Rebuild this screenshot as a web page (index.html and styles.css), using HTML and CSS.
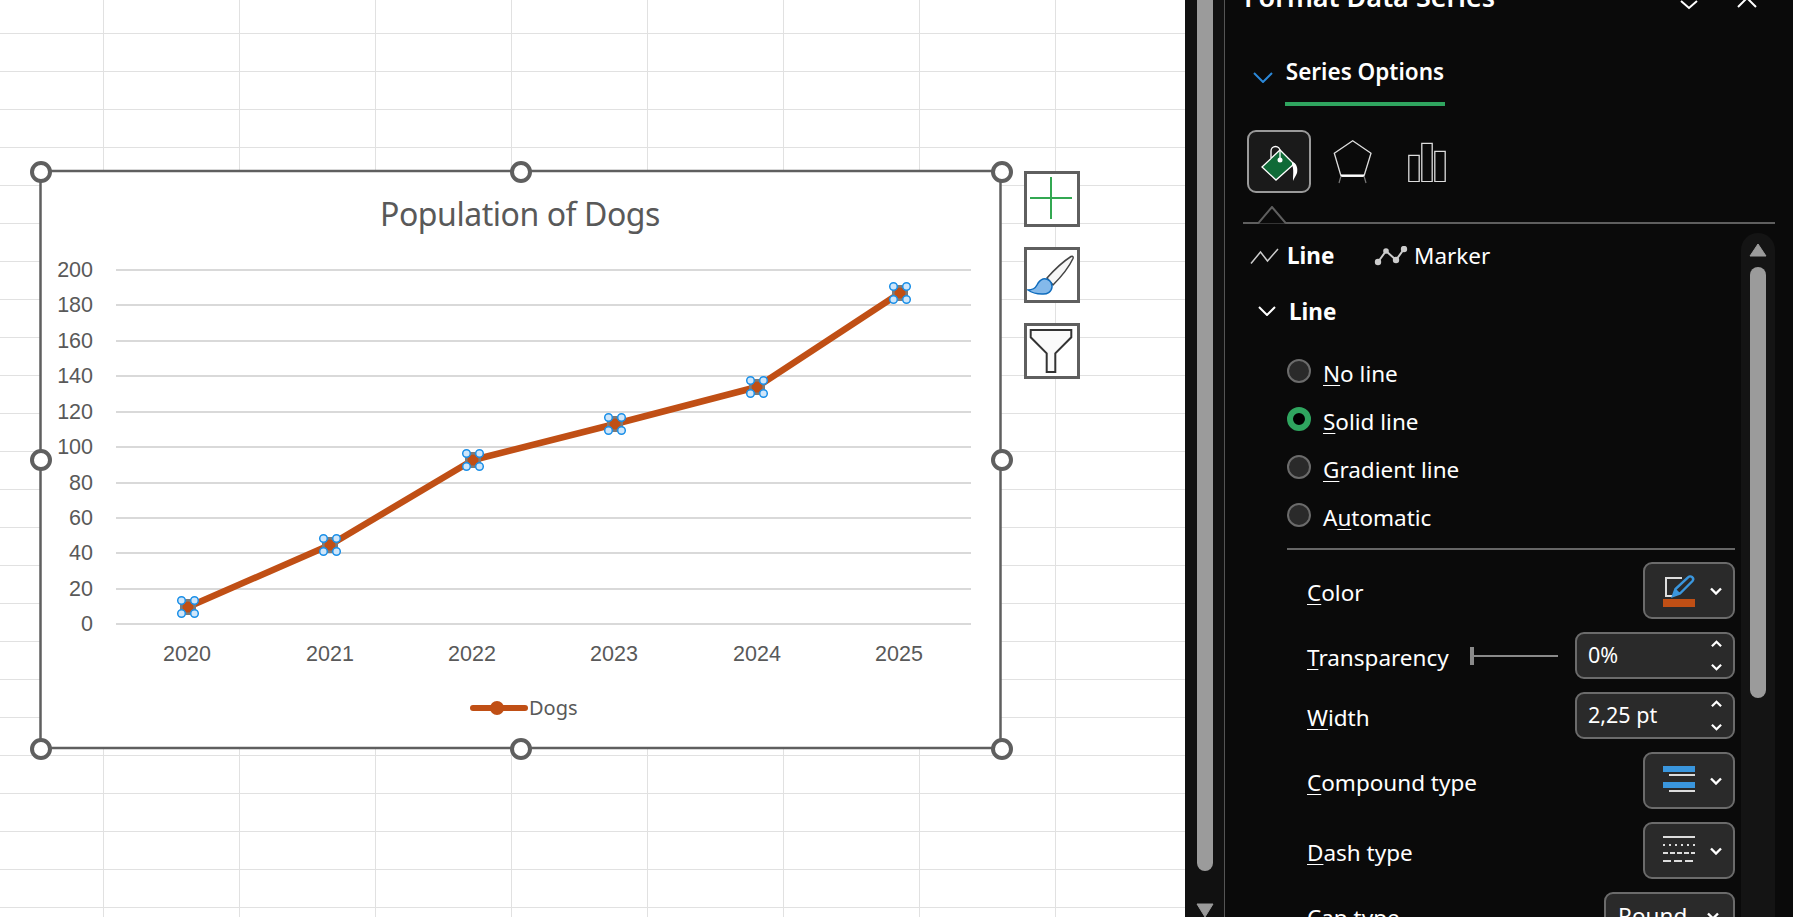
FILE: index.html
```html
<!DOCTYPE html>
<html lang="en">
  <head>
    <meta charset="utf-8" />
    <meta name="viewport" content="width=device-width, initial-scale=1" />
    <title>Format Data Series</title>
    <link rel="stylesheet" href="styles.css">
  </head>
  <body>
    <svg class="defs" width="0" height="0">
      <symbol id="chev" viewBox="0 0 12 8"><path d="M1 1.500l5 5 5-5" fill="none" stroke="#fff" stroke-width="2.400"/></symbol>
      <symbol id="chevup" viewBox="0 0 12 8"><path d="M1 6.500l5-5 5 5" fill="none" stroke="#fff" stroke-width="2.400"/></symbol>
    </svg>

    <!--worksheet with the chart sitting on it-->
    <div class="sheet">
      <svg class="chart" width="1185" height="917" viewBox="0 0 1185 917">
        <rect class="frame" x="40.5" y="171" width="960" height="577"/>
        <text class="title" x="520" y="226" text-anchor="middle">Population of Dogs</text>

        <g class="grid">
          <line x1="116" x2="971" y1="270" y2="270"/>
          <line x1="116" x2="971" y1="305" y2="305"/>
          <line x1="116" x2="971" y1="341" y2="341"/>
          <line x1="116" x2="971" y1="376" y2="376"/>
          <line x1="116" x2="971" y1="412" y2="412"/>
          <line x1="116" x2="971" y1="447" y2="447"/>
          <line x1="116" x2="971" y1="483" y2="483"/>
          <line x1="116" x2="971" y1="518" y2="518"/>
          <line x1="116" x2="971" y1="553" y2="553"/>
          <line x1="116" x2="971" y1="589" y2="589"/>
          <line x1="116" x2="971" y1="624" y2="624"/>
        </g>

        <g class="axis" text-anchor="end">
          <text x="93" y="277">200</text>
          <text x="93" y="312">180</text>
          <text x="93" y="348">160</text>
          <text x="93" y="383">140</text>
          <text x="93" y="419">120</text>
          <text x="93" y="454">100</text>
          <text x="93" y="490">80</text>
          <text x="93" y="525">60</text>
          <text x="93" y="560">40</text>
          <text x="93" y="596">20</text>
          <text x="93" y="631">0</text>
        </g>
        <g class="axis" text-anchor="middle">
          <text x="187" y="661">2020</text>
          <text x="330" y="661">2021</text>
          <text x="472" y="661">2022</text>
          <text x="614" y="661">2023</text>
          <text x="757" y="661">2024</text>
          <text x="899" y="661">2025</text>
        </g>

        <polyline class="series" points="188,607 330,545 473,460 615,424 757,387 900,293"/>

        <!--selected points, square + four blue grips-->
        <g class="pt" transform="translate(188 607)"><rect x="-8" y="-8" width="16" height="16"/><circle class="dot" r="5.5"/><circle class="grip" cx="-6.5" cy="-6.5" r="3.8"/><circle class="grip" cx="6.5" cy="-6.5" r="3.8"/><circle class="grip" cx="-6.5" cy="6.5" r="3.8"/><circle class="grip" cx="6.5" cy="6.5" r="3.8"/></g>
        <g class="pt" transform="translate(330 545)"><rect x="-8" y="-8" width="16" height="16"/><circle class="dot" r="5.5"/><circle class="grip" cx="-6.5" cy="-6.5" r="3.8"/><circle class="grip" cx="6.5" cy="-6.5" r="3.8"/><circle class="grip" cx="-6.5" cy="6.5" r="3.8"/><circle class="grip" cx="6.5" cy="6.5" r="3.8"/></g>
        <g class="pt" transform="translate(473 460)"><rect x="-8" y="-8" width="16" height="16"/><circle class="dot" r="5.5"/><circle class="grip" cx="-6.5" cy="-6.5" r="3.8"/><circle class="grip" cx="6.5" cy="-6.5" r="3.8"/><circle class="grip" cx="-6.5" cy="6.5" r="3.8"/><circle class="grip" cx="6.5" cy="6.5" r="3.8"/></g>
        <g class="pt" transform="translate(615 424)"><rect x="-8" y="-8" width="16" height="16"/><circle class="dot" r="5.5"/><circle class="grip" cx="-6.5" cy="-6.5" r="3.8"/><circle class="grip" cx="6.5" cy="-6.5" r="3.8"/><circle class="grip" cx="-6.5" cy="6.5" r="3.8"/><circle class="grip" cx="6.5" cy="6.5" r="3.8"/></g>
        <g class="pt" transform="translate(757 387)"><rect x="-8" y="-8" width="16" height="16"/><circle class="dot" r="5.5"/><circle class="grip" cx="-6.5" cy="-6.5" r="3.8"/><circle class="grip" cx="6.5" cy="-6.5" r="3.8"/><circle class="grip" cx="-6.5" cy="6.5" r="3.8"/><circle class="grip" cx="6.5" cy="6.5" r="3.8"/></g>
        <g class="pt" transform="translate(900 293)"><rect x="-8" y="-8" width="16" height="16"/><circle class="dot" r="5.5"/><circle class="grip" cx="-6.5" cy="-6.5" r="3.8"/><circle class="grip" cx="6.5" cy="-6.5" r="3.8"/><circle class="grip" cx="-6.5" cy="6.5" r="3.8"/><circle class="grip" cx="6.5" cy="6.5" r="3.8"/></g>

        <line class="legend-line" x1="473" x2="525" y1="708" y2="708"/>
        <circle class="legend-dot" cx="497" cy="708" r="7"/>
        <text class="legend" x="529" y="715">Dogs</text>

        <g class="handles">
          <circle cx="41" cy="172" r="9"/>
          <circle cx="521" cy="172" r="9"/>
          <circle cx="1002" cy="172" r="9"/>
          <circle cx="41" cy="460" r="9"/>
          <circle cx="1002" cy="460" r="9"/>
          <circle cx="41" cy="749" r="9"/>
          <circle cx="521" cy="749" r="9"/>
          <circle cx="1002" cy="749" r="9"/>
        </g>
      </svg>

      <div class="chart-tools">
        <div class="tool">
          <svg width="50" height="50" viewBox="0 0 50 50"><path d="M24 3v42M3 24h42" stroke="#33a852" stroke-width="2"/></svg>
        </div>
        <div class="tool">
          <svg width="50" height="50" viewBox="0 0 50 50">
            <path d="M20 28C28 19 37 11 44 6.500C46 5.500 46.500 7 46 8.500C42 17 34 27 26 35z" fill="#f6f6f6" stroke="#444" stroke-width="1.500"/>
            <path d="M16 29C21 28 25.500 32 25 37C24.500 42 20 44.500 15 44C10 44 5 43 1 40C5 40 8 39 10 35C11.500 32 13 30 16 29z" fill="#84b9ea" stroke="#0f6cbd" stroke-width="1.500"/>
          </svg>
        </div>
        <div class="tool">
          <svg width="50" height="50" viewBox="0 0 50 50"><path d="M3.700 4H44.300V11.300L28.300 27.300V46H19.700V27.300L3.700 11.300z" fill="#fafafa" stroke="#333" stroke-width="2"/></svg>
        </div>
      </div>
    </div>

    <div class="sheet-scroll">
      <div class="sheet-thumb"></div>
      <svg class="sheet-arrow" width="18" height="14" viewBox="0 0 18 14"><path d="M1 1h16l-8 13z" fill="#9b9b9b" stroke="#9b9b9b" stroke-linejoin="round"/></svg>
    </div>

    <!--format pane-->
    <div class="pane">
      <div class="pane-head">
        <div class="pane-title">Format Data Series</div>
        <svg class="pane-drop" width="18" height="10" viewBox="0 0 18 10"><path d="M1 1l8 7 8-7" fill="none" stroke="#fff" stroke-width="2"/></svg>
        <svg class="pane-close" width="20" height="10" viewBox="0 0 20 10"><path d="M1 -9l18 18M19 -9L1 9" fill="none" stroke="#fff" stroke-width="2"/></svg>
      </div>

      <div class="options">
        <svg class="options-chev" width="20" height="11" viewBox="0 0 20 11"><path d="M1 1l9 9 9-9" fill="none" stroke="#2b88d8" stroke-width="2"/></svg>
        <div class="options-tab">Series Options</div>
      </div>

      <div class="kinds">
        <div class="kind-on">
          <svg width="60" height="59" viewBox="0 0 60 59">
            <path d="M22 26V19a4.500 4.500 0 0 1 9 0V28" fill="none" stroke="#fff" stroke-width="1.300"/>
            <path d="M13 35L31 18L45 32L27 48z" fill="#0f6a37" stroke="#fff" stroke-width="1.300"/>
            <path d="M31 18V28" stroke="#fff" stroke-width="1.300"/>
            <circle cx="31" cy="28" r="2.500" fill="#fff"/>
            <path d="M43 30C48 31 49 37 48 41C47 44 45 46 44 49C44 43 45 37 43 33z" fill="#fff"/>
          </svg>
        </div>
        <svg class="kind-icon" width="40" height="44" viewBox="0 0 40 44">
          <path d="M8 36L1.300 13.300L19.700.8L38 13.300L31 36" fill="none" stroke="#ddd" stroke-width="1.300"/>
          <path d="M8 35.700H31" stroke="#fff" stroke-width="2.500"/>
          <path d="M8 36L6 43M31 36L33 43" stroke="#777" stroke-width="1.200"/>
        </svg>
        <svg class="kind-icon kind-bars" width="38" height="40" viewBox="0 0 38 40">
          <path d="M.8 13.300h10.400v26.400H.8zM13.800 1.300h10.400v38.400H13.800zM26.800 9.300h10.400v30.400H26.800z" fill="none" stroke="#ddd" stroke-width="1.300"/>
        </svg>
        <svg class="kinds-caret" width="30" height="18" viewBox="0 0 30 18"><path d="M0 17.500L14 1L28 17.500" fill="#0a0a0a" stroke="#5f5f5f" stroke-width="2"/></svg>
      </div>

      <div class="pane-main">
        <div class="pane-body">
          <div class="subtabs">
            <div class="subtab subtab-on">
              <svg width="29" height="18" viewBox="0 0 29 18"><path d="M1 16.500L10.500 5L17.500 14L28 2" fill="none" stroke="#ccc" stroke-width="1.500"/></svg>
              Line
            </div>
            <div class="subtab">
              <svg width="34" height="20" viewBox="0 0 34 20" fill="#ccc"><path d="M4 16L12 5L22 14L30 3" fill="none" stroke="#ccc" stroke-width="2"/><circle cx="4" cy="16" r="3.200"/><circle cx="12" cy="5" r="2.800"/><circle cx="22" cy="14" r="3.200"/><circle cx="30" cy="3" r="3.200"/></svg>
              Marker
            </div>
          </div>

          <div class="section">
            <svg width="18" height="10" viewBox="0 0 18 10"><path d="M1 1l8 8 8-8" fill="none" stroke="#fff" stroke-width="2"/></svg>
            Line
          </div>

          <div class="radios">
            <div class="radio"><span class="dot-off"></span><span class="radio-text"><u>N</u>o line</span></div>
            <div class="radio"><span class="dot-on"></span><span class="radio-text"><u>S</u>olid line</span></div>
            <div class="radio"><span class="dot-off"></span><span class="radio-text"><u>G</u>radient line</span></div>
            <div class="radio"><span class="dot-off"></span><span class="radio-text">A<u>u</u>tomatic</span></div>
          </div>

          <div class="rule"></div>

          <div class="fields">
            <div class="field">
              <span class="field-name"><u>C</u>olor</span>
              <div class="pick">
                <svg width="32" height="32" viewBox="0 0 32 32">
                  <path d="M19 3H3V21H9" fill="none" stroke="#ddd" stroke-width="2"/>
                  <path d="M10 21l2.500-7L25 2.500a2.800 2.800 0 0 1 4.500 3.500L17 18.500z" fill="#2a2a2a" stroke="#3a96dd" stroke-width="2.400"/>
                  <path d="M10 21l3-7 4 4z" fill="#3a96dd"/>
                  <rect y="24" width="32" height="8" fill="#c04f15"/>
                </svg>
                <svg class="chev" width="12" height="8"><use href="#chev"/></svg>
              </div>
            </div>

            <div class="field">
              <span class="field-name"><u>T</u>ransparency</span>
              <div class="field-right">
                <div class="slider"><span class="slider-tick"></span><span class="slider-line"></span></div>
                <div class="spin">
                  <span>0%</span>
                  <div class="spin-btns">
                    <svg width="11" height="8"><use href="#chevup"/></svg>
                    <svg width="11" height="8"><use href="#chev"/></svg>
                  </div>
                </div>
              </div>
            </div>

            <div class="field">
              <span class="field-name"><u>W</u>idth</span>
              <div class="spin">
                <span>2,25 pt</span>
                <div class="spin-btns">
                  <svg width="11" height="8"><use href="#chevup"/></svg>
                  <svg width="11" height="8"><use href="#chev"/></svg>
                </div>
              </div>
            </div>

            <div class="field">
              <span class="field-name"><u>C</u>ompound type</span>
              <div class="pick">
                <svg class="lines-icon" width="32" height="26" viewBox="0 0 32 26">
                  <rect width="32" height="6" fill="#3a96dd"/>
                  <rect x="6" y="8" width="26" height="2" fill="#ddd"/>
                  <rect y="16" width="32" height="6" fill="#3a96dd"/>
                  <rect x="6" y="24" width="26" height="2" fill="#ddd"/>
                </svg>
                <svg class="chev" width="12" height="8"><use href="#chev"/></svg>
              </div>
            </div>

            <div class="field">
              <span class="field-name"><u>D</u>ash type</span>
              <div class="pick">
                <svg class="lines-icon" width="32" height="26" viewBox="0 0 32 26" fill="none" stroke="#ddd" stroke-width="2">
                  <path d="M0 1H32"/>
                  <path d="M0 9H32" stroke-dasharray="2 4"/>
                  <path d="M0 17H32" stroke-dasharray="5 2"/>
                  <path d="M0 25H32" stroke-dasharray="8 3"/>
                </svg>
                <svg class="chev" width="12" height="8"><use href="#chev"/></svg>
              </div>
            </div>

            <div class="field">
              <span class="field-name"><u>C</u>ap type</span>
              <div class="pick pick-text">
                <span>Round</span>
                <svg class="chev" width="12" height="8"><use href="#chev"/></svg>
              </div>
            </div>
          </div>
        </div>

        <div class="pane-track">
          <svg width="18" height="14" viewBox="0 0 18 14"><path d="M1 13h16L9 1z" fill="#9b9b9b" stroke="#9b9b9b" stroke-linejoin="round"/></svg>
          <div class="track-thumb"></div>
        </div>
      </div>
    </div>
  </body>
</html>
```

FILE: styles.css
```css
html, body{
    margin: 0;
    height: 100%;
    overflow: hidden;
}

body{
    display: flex;
    width: 1793px;
    height: 917px;
    background-color: #0a0a0a;
    font-family: "Noto Sans", sans-serif;
}

.defs{
    position: absolute;
}

svg{
    display: block;
    flex: none;
}

/* worksheet */
.sheet{
    position: relative;
    flex: 0 0 1185px;
    height: 917px;
    background-color: #fff;
    background-image:
        linear-gradient(to right, #e1e1e1 1px, transparent 1px),
        linear-gradient(to bottom, #e1e1e1 1px, transparent 1px);
    background-size: 136px 38px;
    background-position: 103px 33px;
}

.chart{
    position: absolute;
    left: 0;
    top: 0;
}

.frame{
    fill: #fff;
    stroke: #5f5f5f;
    stroke-width: 2.5;
}

.title{
    font-family: "Noto Sans", sans-serif;
    font-size: 32px;
    letter-spacing: -0.45px;
    fill: #595959;
}

.grid line{
    stroke: #d9d9d9;
    stroke-width: 2;
}

.axis text{
    font-family: "Liberation Sans", sans-serif;
    font-size: 21.5px;
    fill: #595959;
}

.series{
    fill: none;
    stroke: #c04f15;
    stroke-width: 6.5;
    stroke-linejoin: round;
}

.pt rect{
    fill: #7b7b7b;
}

.dot{
    fill: #c04f15;
}

.grip{
    fill: #cfe6fa;
    stroke: #1a8fe8;
    stroke-width: 1.5;
}

.legend-line{
    stroke: #c04f15;
    stroke-width: 6;
    stroke-linecap: round;
}

.legend-dot{
    fill: #c04f15;
}

.legend{
    font-family: "Noto Sans", sans-serif;
    font-size: 20px;
    fill: #595959;
}

.handles circle{
    fill: #fff;
    stroke: #5f5f5f;
    stroke-width: 4;
}

.chart-tools{
    position: absolute;
    left: 1024px;
    top: 171px;
    display: flex;
    flex-direction: column;
    gap: 20px;
}

.tool{
    width: 50px;
    height: 50px;
    border: 3px solid #5f5f5f;
    background-color: #fff;
}

/* strip between sheet and pane */
.sheet-scroll{
    flex: 0 0 40px;
    height: 917px;
    box-sizing: border-box;
    background-color: #111;
    border-right: 1px solid #555;
    padding-left: 12px;
}

.sheet-thumb{
    width: 16px;
    height: 871px;
    background-color: #9b9b9b;
    border-radius: 0 0 8px 8px;
}

.sheet-arrow{
    margin-top: 32px;
    margin-left: -1px;
}

/* pane */
.pane{
    flex: 1;
    height: 917px;
    display: flex;
    flex-direction: column;
    color: #fff;
    background-color: #0a0a0a;
}

.pane-head{
    height: 60px;
    display: flex;
    align-items: flex-start;
    padding-left: 19px;
}

.pane-title{
    font-size: 27px;
    font-weight: 600;
    line-height: 30px;
    margin-top: -18px;
    width: 436px;
    white-space: nowrap;
}

.pane-close{
    margin-left: 39px;
    margin-top: -2px;
}

.options{
    height: 46px;
    display: flex;
    align-items: flex-start;
    padding-left: 28px;
}

.options-chev{
    margin-top: 12px;
}

.options-tab{
    margin-left: 12px;
    width: 160px;
    height: 42px;
    box-sizing: content-box;
    border-bottom: 4px solid #2fa55f;
    font-size: 22.5px;
    font-weight: 600;
    line-height: 24px;
    text-align: center;
    white-space: nowrap;
}

.kinds{
    position: relative;
    height: 93px;
    margin: 25px 18px 0;
    box-sizing: border-box;
    padding: 0 0 31px 4px;
    display: flex;
    align-items: center;
    gap: 22px;
    border-bottom: 2px solid #5f5f5f;
}

.kind-on{
    width: 60px;
    height: 59px;
    border: 2px solid #9a9a9a;
    border-radius: 9px;
    background-color: #1a1a1a;
}

.kind-icon{
    margin-top: 2px;
}

.kind-bars{
    margin-left: 13px;
}

.kinds-caret{
    position: absolute;
    left: 15px;
    bottom: -2px;
}

.pane-main{
    flex: 1;
    min-height: 0;
    display: flex;
}

.pane-body{
    flex: 0 0 516px;
    overflow: hidden;
}

.subtabs{
    height: 61px;
    display: flex;
    align-items: center;
    padding-left: 25px;
    font-size: 22.5px;
    box-sizing: border-box;
    padding-top: 2px;
}

.subtab{
    display: flex;
    align-items: center;
    gap: 6px;
}

.subtab-on{
    font-weight: 700;
    width: 124px;
    gap: 8px;
}

.section{
    height: 56px;
    margin-top: -2px;
    display: flex;
    align-items: center;
    gap: 13px;
    padding-left: 33px;
    font-size: 22.5px;
    font-weight: 700;
}

.radios{
    margin-top: 8px;
    padding-left: 62px;
}

.radio{
    height: 48px;
    display: flex;
    align-items: center;
    gap: 12px;
    font-size: 22.5px;
}

.radio-text{
    padding-top: 4px;
}

.radio u, .field-name u{
    text-underline-offset: 3px;
    text-decoration-thickness: 1px;
}

.dot-off, .dot-on{
    width: 24px;
    height: 24px;
    box-sizing: border-box;
    border-radius: 50%;
}

.dot-off{
    background-color: #2a2a2a;
    border: 2px solid #6b6b6b;
}

.dot-on{
    background-color: #000;
    border: 6px solid #2fa55f;
}

.rule{
    margin: 9px 6px 0 62px;
    height: 2px;
    background-color: #666;
}

.fields{
    margin-top: 12px;
    padding: 0 6px 0 82px;
    display: flex;
    flex-direction: column;
    gap: 13px;
}

.field{
    display: flex;
    align-items: center;
    justify-content: space-between;
}

.field-name{
    font-size: 22.5px;
    line-height: 28px;
    padding-top: 4px;
}

.field-right{
    display: flex;
    align-items: center;
    gap: 17px;
}

.slider{
    width: 88px;
    display: flex;
    align-items: center;
}

.slider-tick{
    width: 4px;
    height: 18px;
    background-color: #8a8a8a;
}

.slider-line{
    flex: 1;
    height: 2px;
    background-color: #8a8a8a;
}

.pick{
    width: 92px;
    height: 57px;
    box-sizing: border-box;
    display: flex;
    align-items: center;
    gap: 15px;
    padding-left: 18px;
    background-color: #2a2a2a;
    border: 2px solid #6b6b6b;
    border-radius: 9px;
}

.lines-icon{
    margin-top: -3px;
}

.pick-text{
    width: 131px;
    height: 47px;
    padding-left: 12px;
    gap: 20px;
    font-size: 22.5px;
}

.spin{
    width: 160px;
    height: 47px;
    box-sizing: border-box;
    display: flex;
    align-items: center;
    justify-content: space-between;
    padding: 0 11px;
    background-color: #2a2a2a;
    border: 2px solid #6b6b6b;
    border-radius: 9px;
    font-size: 21.5px;
}

.spin > span{
    margin-top: -3px;
}

.spin-btns{
    display: flex;
    flex-direction: column;
    gap: 15px;
}

.pane-track{
    flex: 0 0 34px;
    height: 685px;
    margin-top: 9px;
    padding-top: 10px;
    box-sizing: border-box;
    display: flex;
    flex-direction: column;
    align-items: center;
    background-color: #141414;
    border-radius: 17px 17px 0 0;
}

.track-thumb{
    margin-top: 10px;
    width: 16px;
    height: 431px;
    background-color: #9b9b9b;
    border-radius: 8px;
}
```
